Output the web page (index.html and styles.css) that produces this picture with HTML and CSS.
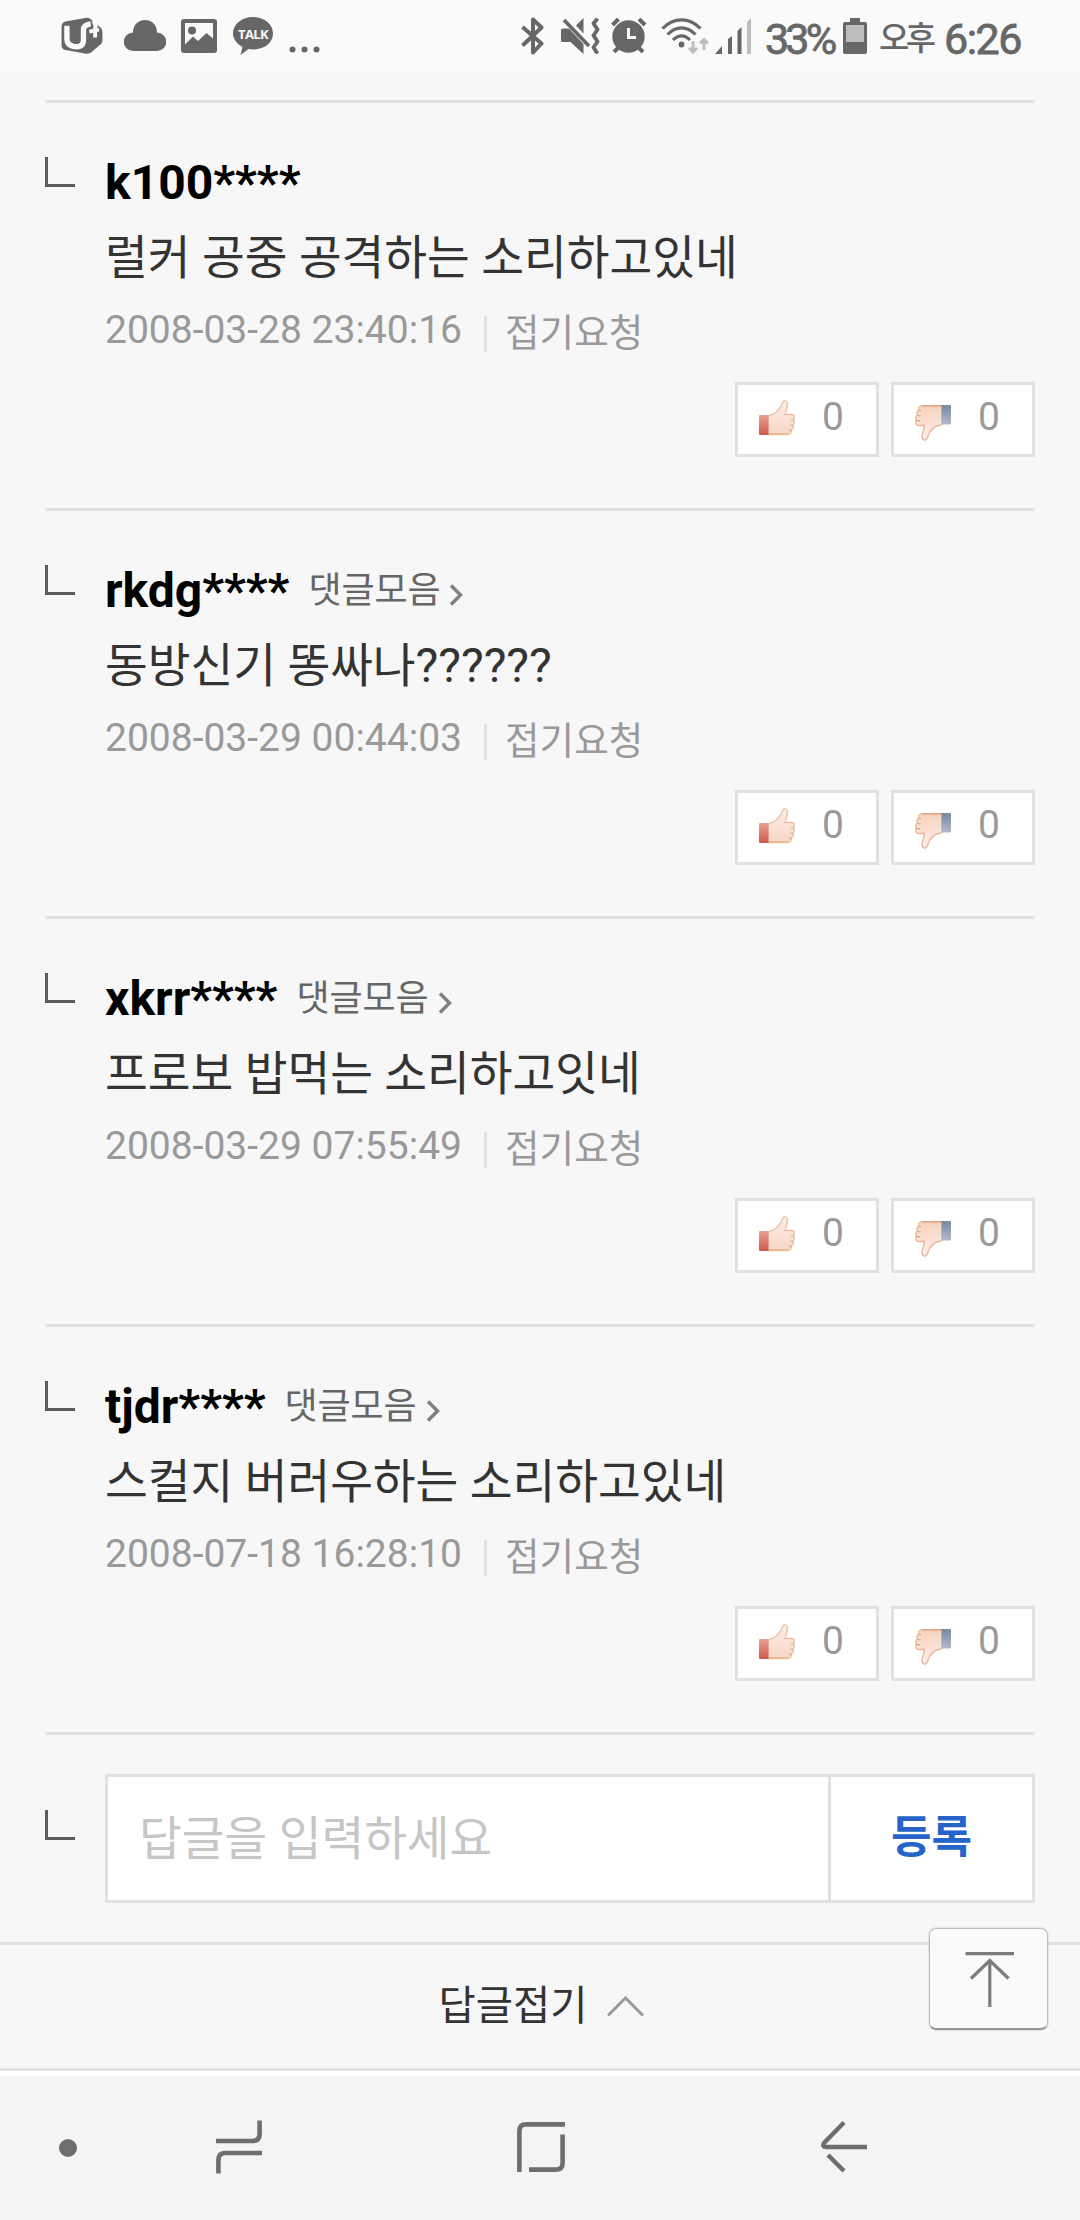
FILE: index.html
```html
<!DOCTYPE html>
<html lang="ko">
<head>
<meta charset="utf-8">
<title>답글</title>
<link rel="stylesheet" href="styles.css">
</head>
<body>
<svg class="defs" width="0" height="0" aria-hidden="true">
  <defs>
    <linearGradient id="skin" x1="0" y1="0" x2="0" y2="1"><stop offset="0" stop-color="#fdf0e8"/><stop offset="1" stop-color="#f6d5c2"/></linearGradient>
    <linearGradient id="skinDown" x1="0" y1="0" x2="0" y2="1"><stop offset="0" stop-color="#f7d2bd"/><stop offset="1" stop-color="#fdf0e8"/></linearGradient>
    <linearGradient id="red" x1="0" y1="0" x2="0" y2="1"><stop offset="0" stop-color="#e9a196"/><stop offset="1" stop-color="#d3584a"/></linearGradient>
    <linearGradient id="blue" x1="0" y1="0" x2="0" y2="1"><stop offset="0" stop-color="#7588a3"/><stop offset="1" stop-color="#b3bacb"/></linearGradient>
    <symbol id="up" viewBox="0 0 36 36">
      <path d="M9 16C15 15 21 10 23.500 3C24 0 28.500 0 28.500 4C28.500 8 27 11 26 14.500H33C35.500 14.500 36 18 34.500 19.500C35.500 21 35.500 24 34 25C34.500 27 34 29.500 32.500 30C32.500 33 31 34.500 28 34.500H9Z" fill="url(#skin)" stroke="#ecc0a4" stroke-width="1.300"/>
      <path d="M32 19.500l2.500.500M31 25l3 .500M30 30l2.500.500M10 34h18" stroke="#dea684" stroke-width="1.200" fill="none"/>
      <path d="M0 16q0-1 1-1h8.500v20H1q-1 0-1-1z" fill="url(#red)"/>
    </symbol>
    <symbol id="down" viewBox="0 0 36 36">
      <path d="M27 .700H7C4.500 .700 3.500 2.500 4 5C2 6 1.500 8 2.500 10C.500 11 0 13.500 1.500 15.500C0 17 0 20 3.500 20.500H9.500C9 24 7 28 7 31.500C7 36 12 36 12.500 32.500C14 26 19 21 27 19.500Z" fill="url(#skinDown)" stroke="#e8b799" stroke-width="1.300"/>
      <path d="M4 5l2 .300M2.500 10.500l3 .300M1.500 15.500l3.500.300M7 1h19" stroke="#d99c7a" stroke-width="1.200" fill="none"/>
      <path d="M26.500 0H35q1 0 1 1v17.500q0 1-1 1h-8.500z" fill="url(#blue)"/>
    </symbol>
    <symbol id="more" viewBox="0 0 14 22"><path d="M2 1.500l9.500 9.500L2 20.500" fill="none" stroke="#808080" stroke-width="3.500"/></symbol>
  </defs>
</svg>

<header class="status">
  <div class="status-left">
    <svg class="ic-uplus" width="42" height="38" viewBox="0 0 42 38"><path d="M4 4.500L24 1Q29 0 32 4L39 10Q42 12 42 16V23Q42 27 39 29L31 36Q28 38.500 24 37.500L4 34Q0 33 0 29V10Q0 5.500 4 4.500Z" fill="#676767"/><path d="M5.500 9V23Q6 30.500 16 30.500Q22.500 30.500 22.500 24V13Q22.500 8 30 7" fill="none" stroke="#fafafa" stroke-width="5.500"/><path d="M33 4l2.500 7M28.500 15l10-2M34.500 10v11" fill="none" stroke="#fafafa" stroke-width="4"/></svg>
    <svg class="ic-cloud" width="42" height="31" viewBox="0 0 42 31"><path d="M9 31a9 9 0 1 1 0-18.500C9 5 14 0 21 0s12 5 12 12.500A9 9 0 1 1 33 31z" fill="#676767"/></svg>
    <svg class="ic-image" width="36" height="34" viewBox="0 0 36 34"><path fill-rule="evenodd" d="M3 0H33Q36 0 36 3V31Q36 34 33 34H3Q0 34 0 31V3Q0 0 3 0ZM4 4V25.500L12 17.500L17 22L25.500 14L32 19.500V4ZM11 7.500a4 4 0 1 1 0 8a4 4 0 0 1 0-8Z" fill="#676767"/></svg>
    <div class="ic-talk">
      <svg width="40" height="38" viewBox="0 0 40 38"><path d="M20 0C31 0 40 7 40 16.500S31 32.500 20 32.500L15.500 32L7.500 38L9.500 30C4 27 0 22 0 16.500C0 7 9 0 20 0Z" fill="#676767"/></svg>
      <span>TALK</span>
    </div>
    <svg class="ic-dots" width="31" height="7" viewBox="0 0 31 7"><g fill="#676767"><circle cx="3.500" cy="3.500" r="3"/><circle cx="15.500" cy="3.500" r="3"/><circle cx="27.500" cy="3.500" r="3"/></g></svg>
  </div>
  <div class="status-right">
    <svg class="ic-bt" width="24" height="38" viewBox="0 0 24 38"><path d="M1.500 10L20.500 26.500L12 35.500V2.500L20.500 10.500L1.500 28.500" fill="none" stroke="#676767" stroke-width="4" stroke-linejoin="round"/></svg>
    <svg class="ic-mute" width="39" height="36" viewBox="0 0 39 36"><g fill="#676767"><path d="M0 12Q0 10.500 1.500 10.500H8L22.500 26V36L9.500 24H1.500Q0 24 0 22.500ZM22.500 0V15.500L15 7.500Z"/></g><path d="M3 2L28 28" stroke="#676767" stroke-width="3.600"/><path d="M36.500 .500L32.500 5.500L36.500 11.500L32.500 17.500L36.500 23.500L32.500 29.500L36.500 35.500" fill="none" stroke="#676767" stroke-width="3.800" stroke-linejoin="round"/></svg>
    <svg class="ic-alarm" width="36" height="35" viewBox="0 0 36 35"><circle cx="17.500" cy="18.500" r="16.200" fill="#676767"/><path d="M1.500 7l6-6M34 7l-6-6M7 30l-4 4M28 30l4 4" stroke="#676767" stroke-width="4"/><path d="M17.500 10v9.500h7.500" stroke="#fafafa" stroke-width="3" fill="none"/></svg>
    <svg class="ic-wifi" width="48" height="36" viewBox="0 0 48 36"><g fill="none" stroke="#676767" stroke-width="3.200"><path d="M1.500 10.500Q10 1.800 20.500 1.800T39.500 10.500"/><path d="M6.500 16.500Q13 9.800 20.500 9.800T34.500 16.500"/><path d="M12 22Q16 17.800 20.500 17.800T29 22"/></g><circle cx="20.500" cy="26.500" r="2.900" fill="#676767"/><path d="M32 23v11M28 30l4 4l4-4M43 32V21M39 25.500l4-4l4 4" fill="none" stroke="#bdbdbd" stroke-width="3"/></svg>
    <svg class="ic-signal" width="36" height="36" viewBox="0 0 36 36"><path d="M0 36l7-8v8zM13 36V21l4-3v18zM22.500 36V13l4-4v27z" fill="#676767"/><path d="M32 36V4l4-4v36z" fill="#bdbdbd"/></svg>
    <span class="pct">33%</span>
    <svg class="ic-batt" width="24" height="36" viewBox="0 0 24 36"><path d="M7 0H17V4H22Q24 4 24 6V34Q24 36 22 36H2Q0 36 0 34V6Q0 4 2 4H7Z" fill="#676767"/><path d="M3 7h18v17H3z" fill="#bdbdbd"/></svg>
    <span class="ampm">오후</span>
    <span class="clock">6:26</span>
  </div>
</header>

<main>
  <ul class="replies">
    <li class="reply">
      <i class="corner"></i>
      <div class="reply-body">
        <div class="head"><b class="name">k100****</b></div>
        <p class="text">럴커 공중 공격하는 소리하고있네</p>
        <div class="meta"><time>2008-03-28 23:40:16</time><a class="fold">접기요청</a></div>
        <div class="votes">
          <button class="vote"><svg class="thumb-up"><use href="#up"/></svg><span>0</span></button>
          <button class="vote"><svg class="thumb-down"><use href="#down"/></svg><span>0</span></button>
        </div>
      </div>
    </li>
    <li class="reply">
      <i class="corner"></i>
      <div class="reply-body">
        <div class="head"><b class="name">rkdg****</b><a class="all">댓글모음</a><svg class="more"><use href="#more"/></svg></div>
        <p class="text">동방신기 똥싸나<span class="latin">??????</span></p>
        <div class="meta"><time>2008-03-29 00:44:03</time><a class="fold">접기요청</a></div>
        <div class="votes">
          <button class="vote"><svg class="thumb-up"><use href="#up"/></svg><span>0</span></button>
          <button class="vote"><svg class="thumb-down"><use href="#down"/></svg><span>0</span></button>
        </div>
      </div>
    </li>
    <li class="reply">
      <i class="corner"></i>
      <div class="reply-body">
        <div class="head"><b class="name">xkrr****</b><a class="all">댓글모음</a><svg class="more"><use href="#more"/></svg></div>
        <p class="text">프로보 밥먹는 소리하고잇네</p>
        <div class="meta"><time>2008-03-29 07:55:49</time><a class="fold">접기요청</a></div>
        <div class="votes">
          <button class="vote"><svg class="thumb-up"><use href="#up"/></svg><span>0</span></button>
          <button class="vote"><svg class="thumb-down"><use href="#down"/></svg><span>0</span></button>
        </div>
      </div>
    </li>
    <li class="reply">
      <i class="corner"></i>
      <div class="reply-body">
        <div class="head"><b class="name">tjdr****</b><a class="all">댓글모음</a><svg class="more"><use href="#more"/></svg></div>
        <p class="text">스컬지 버러우하는 소리하고있네</p>
        <div class="meta"><time>2008-07-18 16:28:10</time><a class="fold">접기요청</a></div>
        <div class="votes">
          <button class="vote"><svg class="thumb-up"><use href="#up"/></svg><span>0</span></button>
          <button class="vote"><svg class="thumb-down"><use href="#down"/></svg><span>0</span></button>
        </div>
      </div>
    </li>
  </ul>
  <form class="write">
    <i class="corner"></i>
    <div class="field"><span class="hint">답글을 입력하세요</span><button type="button" class="submit">등록</button></div>
  </form>
  <div class="collapse">
    <span>답글접기</span>
    <svg width="37" height="21" viewBox="0 0 37 21"><path d="M1 19.500L18.500 2L36 19.500" fill="none" stroke="#999" stroke-width="3"/></svg>
  </div>
  <a class="to-top"><svg width="50" height="55" viewBox="0 0 50 55"><g fill="none" stroke="#7c7c7c" stroke-width="3.200"><path d="M.500 1.700H49M24.800 55V9M6 26.500L24.800 8.500L43.500 26.500"/></g></svg></a>
</main>

<nav class="navbar">
  <svg class="nav-dot" width="18" height="18" viewBox="0 0 18 18"><circle cx="9" cy="9" r="9" fill="#6e6e6e"/></svg>
  <svg class="nav-recent" width="46" height="54" viewBox="0 0 46 54"><path d="M0 21H36.500Q43.600 21 43.600 14V.500M46 33H9.500Q2.400 33 2.400 40V53.500" fill="none" stroke="#6e6e6e" stroke-width="4.600"/></svg>
  <svg class="nav-home" width="48" height="50" viewBox="0 0 48 50"><path d="M2.400 50V9Q2.400 2.400 9 2.400H48M12 47.600H39Q45.600 47.600 45.600 41V12.500" fill="none" stroke="#6e6e6e" stroke-width="4.600"/></svg>
  <svg class="nav-back" width="46" height="52" viewBox="0 0 46 52"><path d="M23 1.500L3 22Q1 26 4.500 26H46M7 34L23 50" fill="none" stroke="#6e6e6e" stroke-width="4.400"/></svg>
</nav>
</body>
</html>
```
FILE: styles.css
```css
* { box-sizing: border-box; }
body {
  margin: 0;
  width: 1080px;
  height: 2220px;
  display: flex;
  flex-direction: column;
  background: #f7f7f7;
  font-family: Roboto, "Noto Sans CJK KR", sans-serif;
  color: #333;
  overflow: hidden;
}
svg { display: block; flex: none; }
.defs { position: absolute; }
button { font: inherit; padding: 0; border-radius: 0; }
ul, p { margin: 0; padding: 0; list-style: none; }

/* status bar */
.status {
  height: 72px;
  flex: none;
  display: flex;
  justify-content: space-between;
  background: #fafafa;
  color: #676767;
  padding: 0 58px 0 61px;
}
.status-left, .status-right { display: flex; align-items: flex-start; }
.ic-uplus { margin-top: 17px; height: 37px; }
.ic-cloud { margin: 20px 0 0 21px; }
.ic-image { margin: 19px 0 0 15px; }
.ic-talk { position: relative; width: 40px; height: 38px; margin: 17px 0 0 16px; }
.ic-talk span {
  position: absolute;
  left: 0;
  top: 7px;
  width: 40px;
  text-align: center;
  font: 700 13px/20px "Open Sans", sans-serif;
  letter-spacing: -.6px;
  color: #fafafa;
}
.ic-dots { margin: 46px 0 0 16px; }
.status-right { width: 502px; }
.ic-bt { margin: 17px 0 0 1px; }
.ic-mute { margin: 18px 0 0 16px; }
.ic-alarm { margin: 18px 0 0 11px; }
.ic-wifi { margin: 18px 0 0 14px; }
.ic-signal { margin: 18px 0 0 6px; }
.pct, .clock, .ampm { font-size: 43px; font-weight: 400; -webkit-text-stroke: .8px #676767; line-height: 48px; margin-top: 15px; white-space: nowrap; }
.pct { width: 76px; margin-left: 14px; letter-spacing: -3.800px; }
.ic-batt { margin: 18px 0 0 2px; }
.ampm { width: 64px; margin-left: 12px; font-size: 33px; letter-spacing: -3.500px; margin-top: 15px; font-weight: 500; -webkit-text-stroke: 0; }
.clock { letter-spacing: -1.5px; margin-left: 1px; }

/* replies */
main { flex: 1; position: relative; padding-top: 28px; border-bottom: 5px solid #fff; }
.replies { padding: 0 45px; }
.reply {
  height: 408px;
  display: flex;
  border-top: 3px solid #e1e1e1;
  padding-top: 50px;
}
.corner {
  flex: none;
  width: 30px;
  height: 30px;
  margin: 4px 30px 0 0;
  border-left: 3px solid #5c5c5c;
  border-bottom: 3px solid #5c5c5c;
}
.reply-body { flex: 1; }
.head { display: flex; height: 60px; line-height: 60px; }
.name { font-size: 48px; font-weight: 700; color: #000; }
.all { font-size: 36px; line-height: 61px; color: #666; letter-spacing: -.1px; margin-left: 19px; }
.more { width: 14px; height: 22px; margin: 23px 0 0 9px; }
.text { font-size: 46.5px; line-height: 74px; height: 72px; margin-top: 8px; color: #333; white-space: nowrap; }
.text, .hint { letter-spacing: -.05px; }
.latin { font-size: 48px; letter-spacing: 0; }
.meta { display: flex; align-items: flex-start; height: 60px; margin-top: 6px; font-size: 39px; line-height: 62px; color: #999; }
.fold { height: 36px; font-size: 37.5px; line-height: 34px; margin: 17px 0 0 22px; padding-left: 18px; border-left: 3px solid #e2e2e2; letter-spacing: .1px; }
.votes { display: flex; justify-content: flex-end; gap: 12px; margin-top: 23px; }
.vote {
  width: 144px;
  height: 75px;
  display: flex;
  background: #fff;
  border: 3px solid #e1e1e1;
  color: #999;
  font-size: 39px;
  line-height: 60px;
}
.vote svg { width: 36px; height: 36px; }
.thumb-up { margin: 15px 0 0 21px; }
.thumb-down { margin: 20px 0 0 21px; }
.vote span { margin: 2px 0 0 27px; }

/* reply form */
.write { display: flex; margin: 0 45px; height: 210px; padding-top: 39px; border-top: 3px solid #e1e1e1; }
.write .corner { margin-top: 36px; }
.field { flex: 1; height: 129px; display: flex; background: #fff; border: 3px solid #e1e1e1; }
.hint { flex: 1; padding-left: 31px; font-size: 46.5px; line-height: 124px; color: #c6c6c6; }
.submit { width: 204px; border: 0; border-left: 3px solid #e1e1e1; background: none; color: #2764c9; font-size: 44px; font-weight: 700; line-height: 117px; }
.collapse {
  display: flex;
  justify-content: center;
  height: 129px;
  border-top: 3px solid #e1e1e1;
  border-bottom: 3px solid #e1e1e1;
  font-size: 40.5px;
  line-height: 123px;
  padding-left: 2px;
}
.collapse svg { margin: 51px 0 0 19px; }
.to-top {
  position: absolute;
  left: 929px;
  top: 1856px;
  width: 119px;
  height: 102px;
  padding: 23px 0 0 35px;
  background: rgba(250, 250, 250, .93);
  border: 1px solid #bdbdbd;
  border-bottom: 2px solid #959595;
  border-radius: 7px;
  box-shadow: 0 0 2px rgba(0, 0, 0, .25);
}

/* system navigation */
.navbar { height: 144px; flex: none; display: flex; background: #f4f4f4; }
.nav-dot { margin: 63px 0 0 59px; }
.nav-recent { margin: 44px 0 0 139px; }
.nav-home { margin: 46px 0 0 255px; }
.nav-back { margin: 45px 0 0 256px; }
```
